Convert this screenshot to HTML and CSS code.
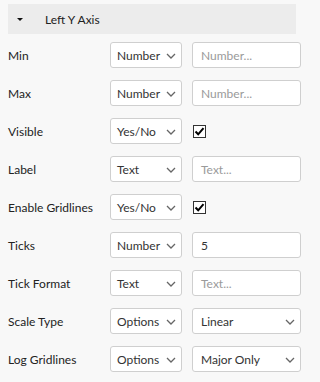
FILE: index.html
```html
<!DOCTYPE html>
<html>
<head>
<meta charset="utf-8">
<link rel="stylesheet" href="styles.css">
</head>
<body>
<div class="panel">
  <div class="header"><span class="tri"></span><span class="title">Left Y Axis</span></div>
  <div class="grid">
    <div class="lbl">Min</div>
    <div class="sel"><span>Number</span><svg class="chev" width="10" height="6" viewBox="0 0 10 6"><path d="M1 1 L5 5 L9 1" fill="none" stroke="#666" stroke-width="1.3"/></svg></div>
    <div class="inp ph">Number...</div>

    <div class="lbl">Max</div>
    <div class="sel"><span>Number</span><svg class="chev" width="10" height="6" viewBox="0 0 10 6"><path d="M1 1 L5 5 L9 1" fill="none" stroke="#666" stroke-width="1.3"/></svg></div>
    <div class="inp ph">Number...</div>

    <div class="lbl">Visible</div>
    <div class="sel"><span>Yes/No</span><svg class="chev" width="10" height="6" viewBox="0 0 10 6"><path d="M1 1 L5 5 L9 1" fill="none" stroke="#666" stroke-width="1.3"/></svg></div>
    <div class="chk-cell"><span class="chk"><svg width="11" height="11" viewBox="0 0 11 11"><path d="M1.5 5.5 L4.2 8.3 L9.5 2.2" fill="none" stroke="#000" stroke-width="2"/></svg></span></div>

    <div class="lbl">Label</div>
    <div class="sel"><span>Text</span><svg class="chev" width="10" height="6" viewBox="0 0 10 6"><path d="M1 1 L5 5 L9 1" fill="none" stroke="#666" stroke-width="1.3"/></svg></div>
    <div class="inp ph">Text...</div>

    <div class="lbl">Enable Gridlines</div>
    <div class="sel"><span>Yes/No</span><svg class="chev" width="10" height="6" viewBox="0 0 10 6"><path d="M1 1 L5 5 L9 1" fill="none" stroke="#666" stroke-width="1.3"/></svg></div>
    <div class="chk-cell"><span class="chk"><svg width="11" height="11" viewBox="0 0 11 11"><path d="M1.5 5.5 L4.2 8.3 L9.5 2.2" fill="none" stroke="#000" stroke-width="2"/></svg></span></div>

    <div class="lbl">Ticks</div>
    <div class="sel"><span>Number</span><svg class="chev" width="10" height="6" viewBox="0 0 10 6"><path d="M1 1 L5 5 L9 1" fill="none" stroke="#666" stroke-width="1.3"/></svg></div>
    <div class="inp">5</div>

    <div class="lbl">Tick Format</div>
    <div class="sel"><span>Text</span><svg class="chev" width="10" height="6" viewBox="0 0 10 6"><path d="M1 1 L5 5 L9 1" fill="none" stroke="#666" stroke-width="1.3"/></svg></div>
    <div class="inp ph">Text...</div>

    <div class="lbl">Scale Type</div>
    <div class="sel"><span>Options</span><svg class="chev" width="10" height="6" viewBox="0 0 10 6"><path d="M1 1 L5 5 L9 1" fill="none" stroke="#666" stroke-width="1.3"/></svg></div>
    <div class="sel wide"><span>Linear</span><svg class="chev" width="10" height="6" viewBox="0 0 10 6"><path d="M1 1 L5 5 L9 1" fill="none" stroke="#666" stroke-width="1.3"/></svg></div>

    <div class="lbl">Log Gridlines</div>
    <div class="sel"><span>Options</span><svg class="chev" width="10" height="6" viewBox="0 0 10 6"><path d="M1 1 L5 5 L9 1" fill="none" stroke="#666" stroke-width="1.3"/></svg></div>
    <div class="sel wide"><span>Major Only</span><svg class="chev" width="10" height="6" viewBox="0 0 10 6"><path d="M1 1 L5 5 L9 1" fill="none" stroke="#666" stroke-width="1.3"/></svg></div>
  </div>
</div>
</body>
</html>
```
FILE: styles.css
```css
html, body {
  margin: 0;
  padding: 0;
  background: #f8f8f8;
}
body {
  font-family: Lato, "Noto Sans", sans-serif;
  font-size: 12px;
  color: #222;
}
.panel {
  padding: 4px 0 0 8px;
}
.header {
  width: 288px;
  height: 30px;
  background: #ececec;
  display: flex;
  align-items: center;
}
.tri {
  width: 0;
  height: 0;
  border-left: 3px solid transparent;
  border-right: 3px solid transparent;
  border-top: 3px solid #111;
  margin-left: 9px;
}
.title {
  margin-left: 22px;
  color: #222;
}
.grid {
  display: grid;
  grid-template-columns: 92px 72px 109px;
  column-gap: 10px;
  row-gap: 12px;
  grid-auto-rows: 26px;
  margin-top: 8px;
}
.lbl {
  display: flex;
  align-items: center;
}
.sel, .inp {
  box-sizing: border-box;
  border: 1px solid #cfcfcf;
  border-radius: 3px;
  background: #fff;
  display: flex;
  align-items: center;
  position: relative;
}
.sel {
  padding-left: 6px;
  color: #333;
}
.inp {
  padding-left: 8px;
  color: #333;
}
.inp.ph {
  color: #9a9a9a;
}
.chev {
  position: absolute;
  right: 5px;
  top: 10px;
}
.sel.wide {
  padding-left: 8px;
}
.chk-cell {
  display: flex;
  align-items: center;
  padding-left: 1px;
}
.chk {
  box-sizing: border-box;
  width: 13px;
  height: 13px;
  border: 1px solid #333;
  background: #fff;
  display: flex;
  align-items: center;
  justify-content: center;
}
```
